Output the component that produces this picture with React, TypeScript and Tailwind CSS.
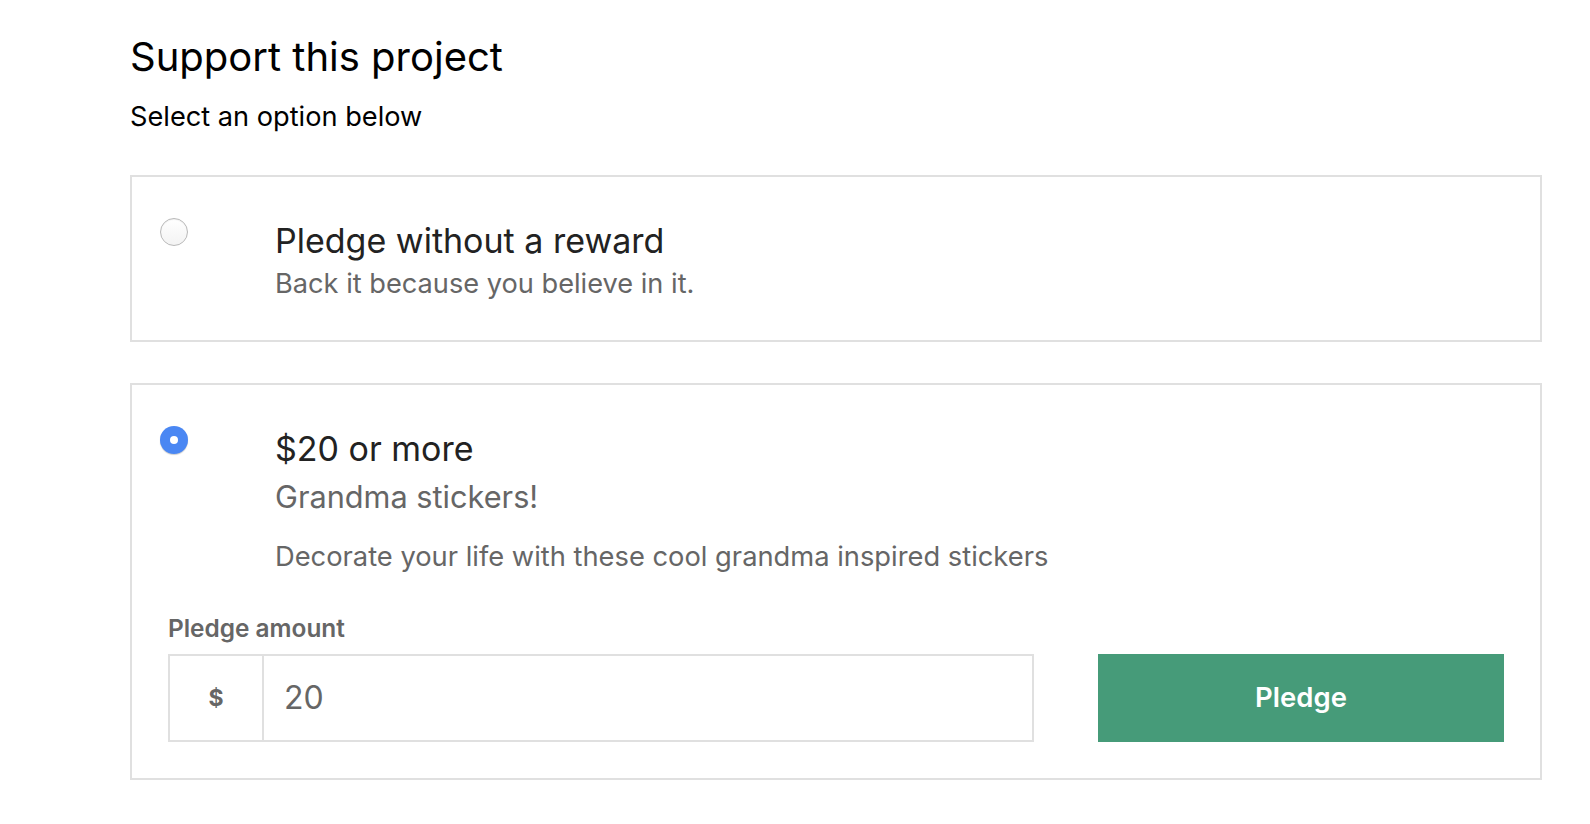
import { useState } from "react";

type Reward = {
  id: string;
  title: string;
  subtitle: string;
  desc?: string;
  min?: number;
};

const rewards: Reward[] = [
  { id: "none", title: "Pledge without a reward", subtitle: "Back it because you believe in it." },
  {
    id: "stickers",
    title: "$20 or more",
    subtitle: "Grandma stickers!",
    desc: "Decorate your life with these cool grandma inspired stickers",
    min: 20,
  },
];

function Radio({ on }: { on: boolean }) {
  if (on) {
    return (
      <span className="flex h-[28px] w-[28px] shrink-0 items-center justify-center rounded-full bg-[#4a87f3] shadow-[0_1px_1px_rgba(0,0,0,0.2)]">
        <span className="h-[8px] w-[8px] rounded-full bg-white" />
      </span>
    );
  }
  return (
    <span className="block h-[28px] w-[28px] shrink-0 rounded-full border border-[#b9b9b9] bg-gradient-to-b from-white to-[#f3f3f3] shadow-[inset_0_1px_1px_rgba(0,0,0,0.06)]" />
  );
}

export default function App() {
  const [selected, setSelected] = useState("stickers");
  const [amount, setAmount] = useState("20");

  return (
    <div className="min-h-screen bg-white font-['Inter',sans-serif]">
      <div className="w-[1542px] pl-[130px] pt-[33px]">
        <h1 className="text-[40px] leading-[48px] font-normal text-black">Support this project</h1>
        <p className="mt-[20px] text-[27.2px] leading-[32px] text-black">Select an option below</p>

        <div className="mt-[42px] flex flex-col gap-[41px]">
          {rewards.map((r) => {
            const on = selected === r.id;
            return (
              <div key={r.id} className="border-2 border-[#e0e0e0] bg-white">
                <div
                  onClick={() => setSelected(r.id)}
                  className="flex cursor-pointer items-start pt-[41px] pl-[28px]"
                >
                  <Radio on={on} />
                  <div className="ml-[87px] mt-[1px]">
                    <div className="text-[34px] leading-[44px] text-[#222]">{r.title}</div>
                    {r.desc ? (
                      <>
                        <div className="mt-[6px] text-[30.7px] leading-[40px] text-[#666]">{r.subtitle}</div>
                        <div className="mt-[22px] text-[27.3px] leading-[36px] text-[#666]">{r.desc}</div>
                      </>
                    ) : (
                      <div className="mt-[3px] pb-[38px] text-[27.2px] leading-[36px] text-[#666]">{r.subtitle}</div>
                    )}
                  </div>
                </div>

                {r.desc && on && (
                  <div className="px-[36px] pt-[38px] pb-[36px]">
                    <div className="text-[24.4px] leading-[30px] font-semibold text-[#666]">Pledge amount</div>
                    <div className="mt-[11px] flex gap-[64px]">
                      <div className="flex h-[88px] flex-1 border-2 border-[#e0e0e0]">
                        <span className="flex w-[94px] items-center justify-center border-r-2 border-[#e0e0e0] text-[23px] font-bold text-[#666]">
                          $
                        </span>
                        <input
                          value={amount}
                          onChange={(e) => setAmount(e.target.value)}
                          className="min-w-0 flex-1 bg-white pl-[20px] text-[32px] text-[#666] outline-none"
                        />
                      </div>
                      <button className="h-[88px] w-[406px] bg-[#469b79] text-[27.5px] font-semibold text-white">
                        Pledge
                      </button>
                    </div>
                  </div>
                )}
              </div>
            );
          })}
        </div>
      </div>
    </div>
  );
}
